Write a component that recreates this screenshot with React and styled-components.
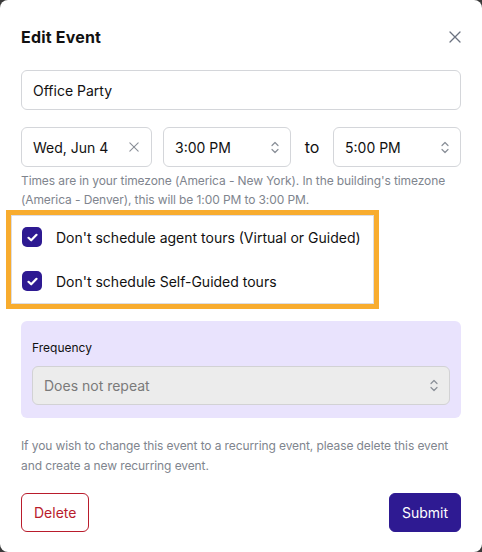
import React, { useState } from 'react';
import styled, { createGlobalStyle } from 'styled-components';

const GlobalStyle = createGlobalStyle`
  body {
    margin: 0;
    background: #3a3a3a;
    font-family: Inter, "Noto Sans", sans-serif;
  }
`;

const Modal = styled.div`
  width: 482px;
  height: 552px;
  box-sizing: border-box;
  background: #fff;
  border-radius: 8px;
  padding: 25px 21px;
  display: flex;
  flex-direction: column;

  & > * {
    flex-shrink: 0;
  }
`;

const Header = styled.div`
  display: flex;
  justify-content: space-between;
  align-items: center;
  height: 24px;
`;

const Title = styled.h2`
  margin: 0;
  font-size: 16px;
  font-weight: 700;
  color: #111;
  letter-spacing: 0.2px;
`;

const IconButton = styled.button`
  border: none;
  background: none;
  padding: 0;
  display: flex;
  color: #6b7280;
  cursor: pointer;
`;

const TextInput = styled.input`
  margin-top: 21px;
  height: 40px;
  box-sizing: border-box;
  border: 1px solid #d4d6da;
  border-radius: 6px;
  padding: 0 11px;
  font-family: inherit;
  font-size: 14px;
  color: #111;
  outline: none;
`;

const TimeRow = styled.div`
  margin-top: 17px;
  display: flex;
  align-items: center;
`;

const Field = styled.div`
  width: ${(p) => p.$width}px;
  height: 40px;
  box-sizing: border-box;
  border: 1px solid #d4d6da;
  border-radius: 6px;
  padding: 0 11px;
  display: flex;
  align-items: center;
  justify-content: space-between;
  font-size: 14px;
  color: #111;
  background: ${(p) => p.$bg || '#fff'};
`;

const ClearIcon = styled.span`
  display: flex;
  color: #8a8f98;
  margin-right: 1px;
`;

const Gap = styled.div`
  width: 11px;
`;

const To = styled.span`
  width: 42px;
  text-align: center;
  font-size: 16px;
  color: #111;
`;

const Hint = styled.p`
  margin: ${(p) => p.$mt}px 0 0;
  font-size: 12px;
  letter-spacing: -0.1px;
  line-height: ${(p) => p.$lh}px;
  color: #80858e;
`;

const Highlight = styled.div`
  margin: 1px 0 0 -15px;
  width: 373px;
  box-sizing: border-box;
  border: 5px solid #f8ac2e;
  box-shadow: inset 0 0 0 1px #dcdde3;
  padding: 12px 11px 13px;
  display: flex;
  flex-direction: column;
  gap: 24px;
`;

const CheckRow = styled.label`
  display: flex;
  align-items: center;
  gap: 14px;
  font-size: 14px;
  color: #111;
  cursor: pointer;
`;

const Box = styled.span`
  width: 20px;
  height: 20px;
  border-radius: 5px;
  background: ${(p) => (p.$on ? '#2e1a92' : '#fff')};
  border: ${(p) => (p.$on ? 'none' : '1px solid #bbb')};
  display: flex;
  align-items: center;
  justify-content: center;
  flex-shrink: 0;
`;

const Panel = styled.div`
  margin-top: 12px;
  background: #e9e3fd;
  border-radius: 6px;
  padding: 18px 11px 13px;
  display: flex;
  flex-direction: column;
  gap: 9px;
`;

const Label = styled.span`
  font-size: 12px;
  line-height: 18px;
  color: #111;
`;

const Select = styled(Field)`
  width: auto;
  height: 39px;
  border-color: #d2d2d4;
  color: #7a7a7a;
`;

const Actions = styled.div`
  margin-top: 17px;
  display: flex;
  justify-content: space-between;
`;

const Button = styled.button`
  height: 39px;
  padding: 0 ${(p) => p.$px}px;
  border-radius: 6px;
  font-family: inherit;
  font-size: 14px;
  cursor: pointer;
  border: 1px solid ${(p) => (p.$danger ? '#b91c2c' : '#2e1a92')};
  background: ${(p) => (p.$danger ? '#fff' : '#2e1a92')};
  color: ${(p) => (p.$danger ? '#b91c2c' : '#fff')};
`;

const Close = ({ size = 12 }) => (
  <svg width={size} height={size} viewBox="0 0 12 12" fill="none" stroke="currentColor" strokeWidth="1.3" strokeLinecap="round">
    <path d="M1 1l10 10M11 1L1 11" />
  </svg>
);

const UpDown = () => (
  <svg width="8" height="13" viewBox="0 0 8 13" fill="none" stroke="#8a8f98" strokeWidth="1.2" strokeLinecap="round" strokeLinejoin="round">
    <path d="M1 4.5L4 1.5l3 3M1 8.5l3 3 3-3" />
  </svg>
);

const Check = () => (
  <svg width="11" height="9" viewBox="0 0 11 9" fill="none" stroke="#fff" strokeWidth="2.2" strokeLinecap="round" strokeLinejoin="round">
    <path d="M1.5 4.8l2.7 2.5L9.5 1.8" />
  </svg>
);

export default function App() {
  const [title, setTitle] = useState('Office Party');
  const [noAgent, setNoAgent] = useState(true);
  const [noSelf, setNoSelf] = useState(true);

  return (
    <>
      <GlobalStyle />
      <Modal>
        <Header>
          <Title>Edit Event</Title>
          <IconButton aria-label="Close">
            <Close />
          </IconButton>
        </Header>

        <TextInput value={title} onChange={(e) => setTitle(e.target.value)} />

        <TimeRow>
          <Field $width={131}>
            Wed, Jun 4
            <ClearIcon>
              <Close size={10} />
            </ClearIcon>
          </Field>
          <Gap />
          <Field $width={128}>
            3:00 PM
            <UpDown />
          </Field>
          <To>to</To>
          <Field $width={128}>
            5:00 PM
            <UpDown />
          </Field>
        </TimeRow>

        <Hint $mt={4} $lh={19}>
          Times are in your timezone (America - New York). In the building's timezone
          (America - Denver), this will be 1:00 PM to 3:00 PM.
        </Hint>

        <Highlight>
          <CheckRow onClick={() => setNoAgent(!noAgent)}>
            <Box $on={noAgent}>{noAgent && <Check />}</Box>
            Don't schedule agent tours (Virtual or Guided)
          </CheckRow>
          <CheckRow onClick={() => setNoSelf(!noSelf)}>
            <Box $on={noSelf}>{noSelf && <Check />}</Box>
            Don't schedule Self-Guided tours
          </CheckRow>
        </Highlight>

        <Panel>
          <Label>Frequency</Label>
          <Select $bg="#ececec">
            Does not repeat
            <UpDown />
          </Select>
        </Panel>

        <Hint $mt={18} $lh={20}>
          If you wish to change this event to a recurring event, please delete this event
          and create a new recurring event.
        </Hint>

        <Actions>
          <Button $danger $px={12}>Delete</Button>
          <Button $px={12}>Submit</Button>
        </Actions>
      </Modal>
    </>
  );
}
